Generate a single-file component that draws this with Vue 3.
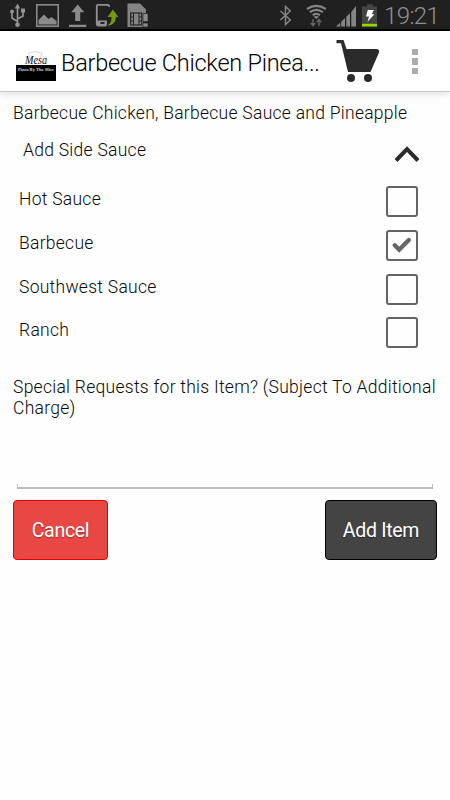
<script setup>
import { ref } from 'vue'

const sauces = ref([
  { name: 'Hot Sauce', checked: false },
  { name: 'Barbecue', checked: true },
  { name: 'Southwest Sauce', checked: false },
  { name: 'Ranch', checked: false },
])
</script>

<template>
  <div class="screen">
    <div class="status">
      <svg class="status-left" width="150" height="29" viewBox="0 0 150 29">
        <g fill="none" stroke="#939393" stroke-width="1.7">
          <path d="M17.5 24V6M17.5 21.5L12 18V12.5M17.5 19L23 16V10.5" />
        </g>
        <g fill="#939393">
          <path d="M17.5 3.5L20.3 8.5H14.7Z" />
          <circle cx="17.5" cy="24.8" r="2.3" />
          <circle cx="12" cy="11.5" r="2" />
          <path d="M21 8.5h4v4h-4z" />
        </g>
        <rect x="36.8" y="4.8" width="21.4" height="21.4" fill="none" stroke="#8b8b8b" stroke-width="1.6" />
        <path d="M38.5 24.5V20L44 14.5L48.5 19L51.5 17L56.5 21V24.5Z" fill="#8b8b8b" />
        <path d="M77.7 4.5L84.3 12.2H80.2V21H75.2V12.2H71.2ZM69 24.7H86.3V27H69Z" fill="#8b8b8b" />
        <path d="M109 7V6Q109 4.8 107.8 4.8H98Q96.8 4.8 96.8 6V24.3Q96.8 25.5 98 25.5H106" fill="none" stroke="#919191" stroke-width="1.8" />
        <path d="M97 20.5H107V25.5H97Z" fill="#919191" />
        <path d="M100.5 22H104.5V24H100.5Z" fill="#252525" />
        <path d="M107 26Q112 23 111.5 17H107.5L113 9.5L118.3 17H115.7Q116 25 107 26Z" fill="#739b0b" />
        <path d="M127.5 3.5H140L146 9.5V13H143V27H127.5Z" fill="#858585" />
        <rect x="130.7" y="13" width="11" height="12" fill="#858585" stroke="#252525" stroke-width="1.2" />
        <path d="M133.5 13V25M139 13V25M131 17H134M131 21H134M139 17H142M139 21H142" stroke="#252525" />
        <path d="M143 13.5H148V21.5H143ZM143 23H148V27H143Z" fill="#8b8b8b" stroke="#252525" stroke-width=".7" />
      </svg>
      <svg class="status-right" width="108" height="29" viewBox="272 0 108 29">
        <path d="M280.5 11L290.3 20L285.5 24.5V6.5L290.3 11L280.5 20" fill="none" stroke="#858585" stroke-width="1.5" />
        <g fill="none" stroke="#858585" stroke-width="2.2">
          <path d="M307 9Q316.3 2.7 325.8 9" />
          <path d="M309.8 12.2Q316.3 7.5 322.9 12.2" />
          <path d="M312.7 15.2Q316.3 12.5 320 15.2" />
        </g>
        <path d="M313.5 16.8Q316.3 15 319 16.8L316.3 19Z" fill="#858585" />
        <path d="M313 19V25.5M310.8 23L313 25.7L315.2 23M319 26V20M316.8 22.3L319 19.6L321.2 22.3" fill="none" stroke="#666" stroke-width="1.4" />
        <path d="M336 26.5L340.2 22.7V26.5ZM341.2 21.8L345 18V26.5H341.2ZM346.3 16.8L350 13.2V26.5H346.3ZM351.3 12L356 6V26.5H351.3Z" fill="#858585" />
        <path d="M362 6.5H367V4.2H372.8V6.5H377V26.5H362Z" fill="#444" />
        <path d="M362 23.8H377V26.5H362Z" fill="#94d500" />
        <path d="M367.8 10H373.8L371.8 14.3H374.4L367.5 21.8L369 16.5H366Z" fill="#fff" />
      </svg>
      <span class="clock">19:21</span>
    </div>

    <header class="bar">
      <svg class="logo" width="40" height="31" viewBox="0 0 40 31">
        <path d="M12 2Q19 -1 26 2L22 13Q15 11 12 2Z" fill="#fafafa" stroke="#c6c6c6" stroke-width=".6" />
        <rect x="0" y="14" width="40" height="16" fill="#000" />
        <text x="9" y="12.8" class="script-text" textLength="22" lengthAdjust="spacingAndGlyphs">Mesa</text>
        <text x="2" y="19.6" class="tagline" textLength="36" lengthAdjust="spacingAndGlyphs">Pizza By The Slice</text>
      </svg>
      <h1 class="title">Barbecue Chicken Pinea...</h1>
      <svg class="cart" width="44" height="44" viewBox="0 0 44 44">
        <path d="M.5 1H7.5L10.5 10H41Q44 11.2 43 13.5L34.5 33H12L5 4.2H.5Z" fill="#2b2b2b" />
        <circle cx="15" cy="39" r="4" fill="#2b2b2b" />
        <circle cx="32" cy="39" r="4" fill="#2b2b2b" />
      </svg>
      <div class="overflow"><i></i><i></i><i></i></div>
    </header>

    <main class="content">
      <p class="desc">Barbecue Chicken, Barbecue Sauce and Pineapple</p>
      <div class="group">
        <span class="group-name">Add Side Sauce</span>
        <svg class="chevron" width="26" height="18" viewBox="0 0 26 18">
          <path d="M2 15.5L13 4.2L24 15.5" fill="none" stroke="#2b2b2b" stroke-width="4" />
        </svg>
      </div>
      <div v-for="s in sauces" :key="s.name" class="option" @click="s.checked = !s.checked">
        <span class="option-name">{{ s.name }}</span>
        <span class="box">
          <svg v-if="s.checked" width="20" height="18" viewBox="0 0 20 18">
            <path d="M2.8 9.3L7.2 13.7L16.8 4" fill="none" stroke="#666" stroke-width="4.4" stroke-linecap="round" />
          </svg>
        </span>
      </div>
      <p class="special">Special Requests for this Item? (Subject To Additional<br>Charge)</p>
      <div class="field"></div>
      <div class="actions">
        <button class="btn cancel">Cancel</button>
        <button class="btn add">Add Item</button>
      </div>
    </main>
  </div>
</template>

<style>
body {
  background: #fefefe;
}
</style>

<style scoped>
.screen {
  width: 450px;
  height: 800px;
  overflow: hidden;
  background: #fefefe;
  color: #080808;
  font-family: Roboto, "Liberation Sans", sans-serif;
}
.status {
  height: 31px;
  box-sizing: border-box;
  border-bottom: 2px solid #000;
  background: #202020;
  display: flex;
}
.status-right {
  margin-left: 122px;
}
.clock {
  margin-left: 4px;
  color: #909090;
  font-size: 24px;
  font-weight: 300;
  letter-spacing: -0.6px;
  line-height: 32px;
  white-space: nowrap;
}
.bar {
  height: 61px;
  box-sizing: border-box;
  display: flex;
  align-items: flex-start;
  background: #fff;
  border-bottom: 1px solid #c6c6c6;
  box-shadow: 0 2px 8px rgba(0, 0, 0, 0.12);
}
.logo {
  margin: 20px 0 0 16px;
}
.script-text {
  font: italic 11.5px "Liberation Serif", serif;
  fill: #111;
}
.tagline {
  font: bold 5px "Liberation Serif", serif;
  fill: #ddd;
}
.title {
  width: 275px;
  margin: 16px 0 0 5px;
  font-size: 23.5px;
  font-weight: 300;
  letter-spacing: -0.25px;
  line-height: 32px;
  color: #000;
  white-space: nowrap;
}
.cart {
  margin-top: 8px;
}
.overflow {
  display: flex;
  flex-direction: column;
  gap: 3px;
  margin: 18px 0 0 32px;
}
.overflow i {
  width: 6px;
  height: 6.3px;
  background: #acacac;
}
.content {
  padding: 11px 13px 0;
  font-size: 17.5px;
  font-weight: 300;
  letter-spacing: 0.27px;
}
.desc {
  margin: 0;
  line-height: 21px;
  white-space: nowrap;
}
.group {
  height: 62px;
  display: flex;
  justify-content: space-between;
  padding: 16px 17px 0 10px;
  box-sizing: border-box;
}
.group-name {
  line-height: 21px;
}
.chevron {
  margin-top: 5px;
}
.option {
  height: 43.8px;
  display: flex;
  justify-content: space-between;
  padding: 0 19.5px 0 6px;
}
.option-name {
  margin-top: 3px;
  line-height: 21px;
}
.box {
  width: 31.5px;
  height: 31px;
  box-sizing: border-box;
  border: 2px solid #646464;
  border-radius: 3px;
  display: flex;
  align-items: center;
  justify-content: center;
}
.special {
  margin: 15.8px 0 0;
  line-height: 21px;
  white-space: nowrap;
}
.field {
  height: 5px;
  box-sizing: border-box;
  margin: 65.5px 4px 0;
  border: 1px solid #bbb;
  border-top: 0;
  border-bottom-width: 2px;
}
.actions {
  display: flex;
  justify-content: space-between;
  margin-top: 11px;
}
.btn {
  height: 60px;
  box-sizing: border-box;
  padding: 0;
  border-radius: 4px;
  color: #fff;
  font-family: inherit;
  font-size: 19.5px;
  font-weight: 400;
  letter-spacing: -0.3px;
  text-shadow: 0 1px 1px rgba(0, 0, 0, 0.35);
}
.cancel {
  width: 95px;
  border: 1px solid #e60000;
  background: #e94744;
}
.add {
  width: 112px;
  border: 1px solid #000;
  background: #444;
}
</style>
